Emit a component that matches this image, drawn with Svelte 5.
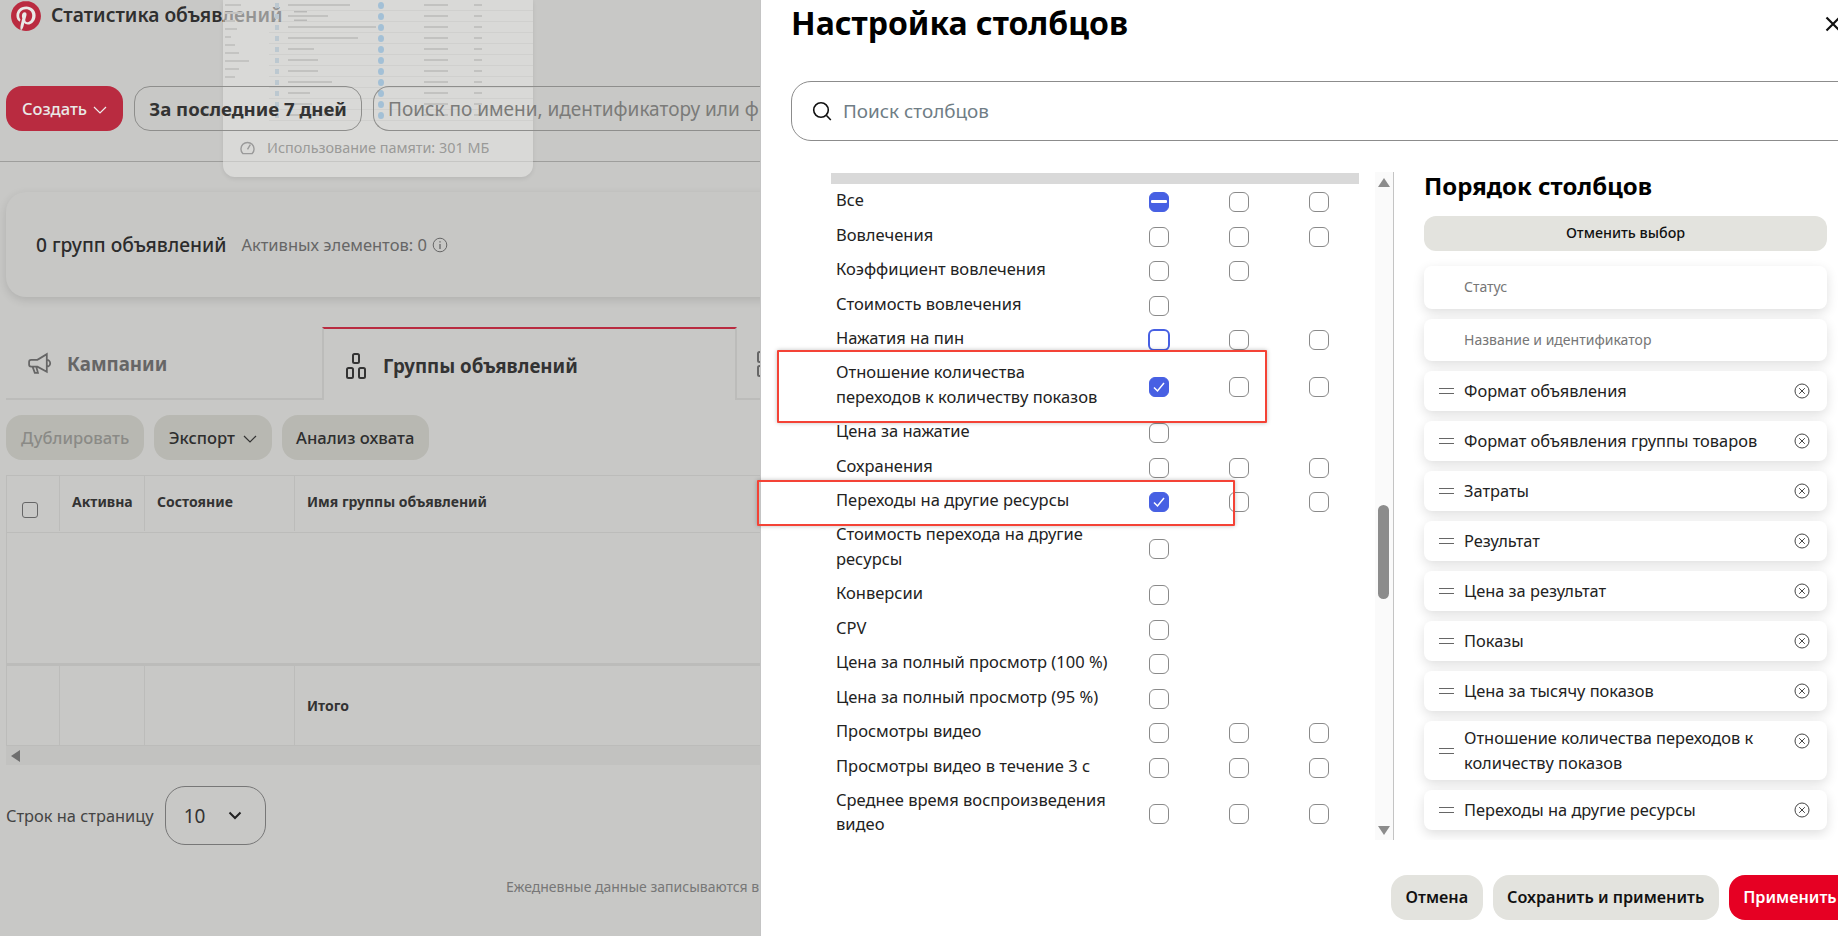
<script>
  const rows = [
    ['Все', ['minus', 'off', 'off']],
    ['Вовлечения', ['off', 'off', 'off']],
    ['Коэффициент вовлечения', ['off', 'off']],
    ['Стоимость вовлечения', ['off']],
    ['Нажатия на пин', ['focus', 'off', 'off']],
    ['Отношение количества переходов к количеству показов', ['on', 'off', 'off']],
    ['Цена за нажатие', ['off']],
    ['Сохранения', ['off', 'off', 'off']],
    ['Переходы на другие ресурсы', ['on', 'off', 'off']],
    ['Стоимость перехода на другие ресурсы', ['off']],
    ['Конверсии', ['off']],
    ['CPV', ['off']],
    ['Цена за полный просмотр (100 %)', ['off']],
    ['Цена за полный просмотр (95 %)', ['off']],
    ['Просмотры видео', ['off', 'off', 'off']],
    ['Просмотры видео в течение 3 с', ['off', 'off', 'off']],
    ['Среднее время воспроизведения видео', ['off', 'off', 'off']]
  ];
  const order = [
    'Формат объявления', 'Формат объявления группы товаров', 'Затраты', 'Результат',
    'Цена за результат', 'Показы', 'Цена за тысячу показов',
    'Отношение количества переходов к количеству показов', 'Переходы на другие ресурсы'
  ];
  const thumbs = [62, 40, 88, 70, 26, 30, 30, 44, 22, 24, 50];
  const side = [16, 18, 10, 12, 6, 10, 14, 24, 14, 10];
</script>

<div class="page">
  <section class="back">
    <header class="brand">
      <svg class="logo" viewBox="0 0 24 24"><circle cx="12" cy="12" r="11" fill="#e9e9e7"/><path fill="#ba2b40" d="M12.017 0C5.396 0 .029 5.367.029 11.987c0 5.079 3.158 9.417 7.618 11.162-.105-.949-.199-2.403.041-3.439.219-.937 1.406-5.957 1.406-5.957s-.359-.72-.359-1.781c0-1.663.967-2.911 2.168-2.911 1.024 0 1.518.769 1.518 1.688 0 1.029-.653 2.567-.992 3.992-.285 1.193.6 2.165 1.775 2.165 2.128 0 3.768-2.245 3.768-5.487 0-2.861-2.063-4.869-5.008-4.869-3.41 0-5.409 2.562-5.409 5.199 0 1.033.394 2.143.889 2.741.099.12.112.225.085.345-.09.375-.293 1.199-.334 1.363-.053.225-.172.271-.401.165-1.495-.69-2.433-2.878-2.433-4.646 0-3.776 2.748-7.252 7.92-7.252 4.158 0 7.392 2.967 7.392 6.923 0 4.135-2.607 7.462-6.233 7.462-1.214 0-2.354-.629-2.758-1.379l-.749 2.848c-.269 1.045-1.004 2.352-1.498 3.146 1.123.345 2.306.535 3.55.535 6.607 0 11.985-5.365 11.985-11.987C23.97 5.39 18.592.026 11.985.026L12.017 0z"/></svg>
      <span class="brand-title">Статистика объявлений</span>
      <svg class="burger" viewBox="0 0 14 10"><path d="M0 .5h14M0 5h14M0 9.500h14" stroke="#555" stroke-width="1"/></svg>
    </header>

    <div class="toolbar">
      <div class="create">Создать <svg class="chev" viewBox="0 0 14 8"><path d="M1 1l6 6 6-6" fill="none" stroke="#eee" stroke-width="1.200"/></svg></div>
      <div class="range">За последние 7 дней</div>
      <div class="find">Поиск по имени, идентификатору или фильтрам</div>
    </div>
    <div class="rule"></div>

    <div class="summary">
      <strong>0 групп объявлений</strong>
      <span class="active">Активных элементов: 0</span>
      <svg class="info" viewBox="0 0 16 16"><circle cx="8" cy="8" r="6.800" fill="none" stroke="#666" stroke-width="1"/><path d="M8 7v5M8 4.200v1.300" stroke="#666" stroke-width="1.300"/></svg>
    </div>

    <nav class="tabs">
      <div class="tab">
        <svg class="tab-ico" viewBox="0 0 24 24"><path d="M4 8.500h6l9-5.500v17l-9-5h-6a2 2 0 0 1-2-2v-2.500a2 2 0 0 1 2-2zM5.500 15.500l2 5.500h3l-1.500-5.500M19 8.500a3.200 3.200 0 0 1 0 6.500" fill="none" stroke="#666" stroke-width="1.700"/></svg>
        Кампании
      </div>
      <div class="tab current">
        <svg class="tab-ico groups" viewBox="0 0 20 26"><g fill="none" stroke="#333" stroke-width="2"><rect x="7" y="1" width="6" height="9" rx="1.500"/><rect x="1" y="15" width="6" height="10" rx="1.500"/><rect x="13" y="15" width="6" height="10" rx="1.500"/></g></svg>
        Группы объявлений
      </div>
      <div class="tab rest">
        <svg class="tab-ico groups" viewBox="0 0 20 26"><g fill="none" stroke="#666" stroke-width="2"><rect x="1" y="1" width="6" height="10" rx="1.500"/><rect x="1" y="15" width="6" height="10" rx="1.500"/></g></svg>
      </div>
    </nav>

    <div class="actions">
      <div class="soft muted">Дублировать</div>
      <div class="soft">Экспорт <svg class="chev" viewBox="0 0 14 8"><path d="M1 1l6 6 6-6" fill="none" stroke="#333" stroke-width="1.200"/></svg></div>
      <div class="soft">Анализ охвата</div>
    </div>

    <div class="table">
      <div class="tr head">
        <div class="td c1"><span class="box"></span></div>
        <div class="td c2">Активна</div>
        <div class="td c3">Состояние</div>
        <div class="td c4">Имя группы объявлений</div>
      </div>
      <div class="empty"></div>
      <div class="tr total">
        <div class="td c1"></div>
        <div class="td c2"></div>
        <div class="td c3"></div>
        <div class="td c4">Итого</div>
      </div>
      <div class="hscroll"><i></i></div>
    </div>

    <div class="pager">
      <span>Строк на страницу</span>
      <div class="select">10 <svg viewBox="0 0 14 9"><path d="M1.500 1.500l5.500 5.500 5.500-5.500" fill="none" stroke="#222" stroke-width="2"/></svg></div>
    </div>
    <p class="note">Ежедневные данные записываются в</p>

    <aside class="popup">
      <div class="side">
        {#each side as w}<i style="width:{w}px"></i>{/each}
      </div>
      <div class="mini">
        {#each thumbs as w}
          <div class="mini-row">
            <i class="sq"></i><span><i class="ln" style="width:{w}px"></i></span><i class="dot"></i><i class="ln short"></i><i class="ln tiny"></i>
          </div>
        {/each}
      </div>
      <div class="mem">
        <svg viewBox="0 0 16 16"><path d="M3 14.500a7 7 0 1 1 10 0zM8 10l3-5" fill="none" stroke="#9a9a9a" stroke-width="1.500"/></svg>
        Использование памяти: 301 МБ
      </div>
    </aside>
  </section>

  <section class="modal">
    <h1>Настройка столбцов</h1>
    <svg class="close" viewBox="0 0 16 16"><path d="M1.500 1.500l13 13M14.500 1.500l-13 13" stroke="#111" stroke-width="2.200"/></svg>
    <div class="search">
      <svg viewBox="0 0 20 20"><circle cx="9" cy="9" r="7.300" fill="none" stroke="#111" stroke-width="1.600"/><path d="M14.500 14.500l4.300 4.500" stroke="#111" stroke-width="1.600"/></svg>
      <span>Поиск столбцов</span>
    </div>

    <div class="body">
      <div class="list">
        <div class="list-top"></div>
        {#each rows as [label, cells]}
          <div class="row">
            <div class="label"><span>{label}</span></div>
            {#each cells as c}
              <div class="cell">
                <span class="check {c}">
                  {#if c === 'on'}
                    <svg viewBox="0 0 20 20"><path d="M5 10.500l3.500 3.500 6.500-8" fill="none" stroke="#fff" stroke-width="1.500"/></svg>
                  {:else if c === 'minus'}
                    <i></i>
                  {/if}
                </span>
              </div>
            {/each}
          </div>
        {/each}
      </div>

      <div class="vscroll">
        <i class="up"></i>
        <b></b>
        <i class="down"></i>
      </div>

      <div class="order">
        <h2>Порядок столбцов</h2>
        <div class="clear">Отменить выбор</div>
        <div class="item fixed first">Статус</div>
        <div class="item fixed second">Название и идентификатор</div>
        {#each order as name}
          <div class="item">
            <svg class="drag" viewBox="0 0 15 6"><path d="M0 .5h15M0 5.500h15" stroke="#666" stroke-width="1"/></svg>
            <span class="name">{name}</span>
            <svg class="rm" viewBox="0 0 16 16"><circle cx="8" cy="8" r="7" fill="none" stroke="#444" stroke-width="1"/><path d="M5.200 5.200l5.600 5.600M10.800 5.200l-5.600 5.600" stroke="#444" stroke-width="1"/></svg>
          </div>
        {/each}
      </div>
    </div>

    <footer>
      <div class="btn">Отмена</div>
      <div class="btn">Сохранить и применить</div>
      <div class="btn red">Применить</div>
    </footer>
  </section>

  <div class="mark one"></div>
  <div class="mark two"></div>
</div>

<style>
  :global(body) { margin: 0; background: #fff; }
  .page {
    position: relative;
    display: grid;
    grid-template-columns: 760px 1078px;
    width: 1838px;
    height: 936px;
    overflow: hidden;
    font-family: "Noto Sans", "Open Sans", sans-serif;
    color: #333;
  }

  /* dimmed page */
  .back {
    position: relative;
    background: #c8c8c6;
    height: 936px;
    overflow: hidden;
    padding-left: 6px;
    box-sizing: border-box;
  }
  .brand { display: flex; align-items: center; height: 31px; padding-left: 5px; }
  .logo { width: 30px; height: 30px; flex: none; }
  .brand-title { margin-left: 10px; font-size: 19.200px; font-weight: 600; color: #2f2f2f; white-space: nowrap; padding-bottom: 2px; }
  .burger { width: 13px; height: 10px; margin-left: 12px; }

  .toolbar { position: relative; z-index: 1; display: flex; gap: 11px; margin-top: 55px; height: 45px; }
  .create {
    flex: none; width: 117px; box-sizing: border-box; background: #b92b40; color: #e9e9e7; border-radius: 16px;
    display: flex; align-items: center; justify-content: center; gap: 6px; font-size: 16.500px; font-weight: 500;
  }
  .chev { width: 14px; height: 8px; margin-top: 2px; flex: none; }
  .range {
    flex: none; width: 228px; box-sizing: border-box; border: 1px solid #8e8e8c; border-radius: 16px;
    display: flex; align-items: center; justify-content: center; font-size: 18.600px; font-weight: 700; color: #333; white-space: nowrap;
  }
  .find {
    width: 700px; flex: none; box-sizing: border-box; border: 1px solid #8e8e8c; border-radius: 16px 0 0 16px; border-right: 0;
    display: flex; align-items: center; padding-left: 14px; font-size: 19px; color: #7b7b79; white-space: nowrap;
  }
  .rule { height: 1px; background: #9e9e9c; margin: 30px 0 0 -6px; }

  .summary {
    margin-top: 30px; margin-right: -10px; height: 105px; border-radius: 20px 0 0 20px;
    background: #c7c7c5; box-shadow: 0 3px 10px rgba(0, 0, 0, .12);
    display: flex; align-items: center; padding-left: 30px;
  }
  .summary strong { font-size: 19.200px; font-weight: 500; color: #2c2c2c; }
  .active { margin-left: 15px; font-size: 16.500px; color: #666; }
  .info { width: 16px; height: 16px; margin-left: 5px; }

  .tabs { display: flex; margin-top: 30px; height: 73px; margin-right: -6px; }
  .tab {
    flex: none; width: 316px; box-sizing: border-box; border-bottom: 2px solid #bcbcba;
    display: flex; align-items: center; gap: 15px; padding-left: 21px; padding-top: 2px;
    font-size: 18.700px; font-weight: 700; color: #666;
  }
  .tab.current {
    width: 415px; border: solid #bcbcba; border-width: 0 2px; border-top: 2px solid #b92b40;
    padding-left: 22px; gap: 17px; color: #333; padding-top: 2px;
  }
  .tab.rest { flex: 1; padding-left: 20px; width: auto; }
  .tab-ico { width: 25px; height: 25px; flex: none; }
  .tab-ico.groups { width: 20px; height: 26px; }

  .actions { display: flex; gap: 10px; margin-top: 15px; height: 45px; }
  .soft {
    box-sizing: border-box; background: #b8b8b2; border-radius: 16px; padding: 0 14.500px;
    display: flex; align-items: center; gap: 8px; font-size: 16.600px; font-weight: 500; color: #2e2e2e;
  }
  .soft.muted { color: #8a8a86; padding: 0 15px; }

  .table { margin-top: 15px; margin-right: -6px; }
  .tr { display: grid; grid-template-columns: 53px 85px 150px 1fr; box-sizing: border-box; border: solid #bcbcba; border-width: 1px 0 1px 1px; }
  .head { height: 58px; }
  .total { height: 83px; border-top: 3px solid #bcbcba; border-bottom: 1px solid #bcbcba; }
  .td { border-right: 1px solid #bcbcba; padding-left: 12px; font-size: 14px; font-weight: 700; color: #333; display: flex; align-items: center; white-space: nowrap; }
  .td.c4 { border-right: 0; }
  .head .td { padding-bottom: 5px; box-sizing: border-box; height: 55px; }
  .head .c1 { padding: 12px 0 0 15px; }
  .box { width: 14px; height: 14px; border: 1px solid #666; border-radius: 3px; display: block; }
  .empty { height: 130px; border-left: 1px solid #bcbcba; box-sizing: border-box; }
  .hscroll { height: 19px; background: #c2c2c0; display: flex; align-items: center; padding-left: 5px; }
  .hscroll i { border: solid transparent; border-width: 6px 9px 6px 0; border-right-color: #6e6e6e; }

  .pager { display: flex; align-items: center; gap: 11px; margin-top: 21px; font-size: 16.400px; color: #444; }
  .select {
    width: 101px; height: 59px; box-sizing: border-box; border: 1px solid #777; border-radius: 20px;
    display: flex; align-items: center; padding-left: 18px; gap: 23px; font-size: 19px; color: #333;
  }
  .select svg { width: 14px; height: 9px; }
  .note { margin: 32px 0 0 500px; font-size: 14px; color: #777; white-space: nowrap; }

  .popup {
    position: absolute; left: 223px; top: 0; width: 310px; height: 177px; box-sizing: border-box;
    background: rgba(232, 232, 230, .55); border-radius: 0 0 12px 12px; box-shadow: 0 2px 4px rgba(0, 0, 0, .08);
    overflow: hidden; display: flex;
  }
  .side { width: 46px; flex: none; display: flex; flex-direction: column; gap: 6px; padding: 4px 0 0 2px; box-sizing: border-box; }
  .side i { display: block; height: 2px; background: #c4c4c2; flex: none; }
  .mini { flex: 1; display: flex; flex-direction: column; height: 125px; }
  .mini-row {
    display: grid; grid-template-columns: 13px 90px 46px 50px 1fr; align-items: center; padding-left: 6px;
    height: 11px; flex: none; border-bottom: 1px solid rgba(0, 0, 0, .04); box-sizing: border-box;
  }
  .mini-row span { display: block; }
  .mini-row i { display: block; }
  .sq { width: 4px; height: 5px; background: #bcc8d0; }
  .ln { height: 2px; background: #c2c2c0; }
  .dot { width: 6px; height: 7px; border-radius: 50%; background: #a3c0d6; }
  .ln.short { width: 24px; }
  .ln.tiny { width: 8px; }
  .mem {
    position: absolute; left: 17px; top: 138px; display: flex; align-items: center; gap: 12px;
    font-size: 14.400px; color: #9a9a98; white-space: nowrap;
  }
  .mem svg { width: 15px; height: 15px; }

  /* modal */
  .modal {
    position: relative; background: #fff; height: 936px; box-sizing: border-box; border-left: 1px solid #c4c4c4; overflow: hidden;
  }
  h1 { margin: 0; padding: 0 0 0 30px; height: 46px; font-size: 32px; line-height: 46px; font-weight: 700; color: #000; white-space: nowrap; }
  .close { position: absolute; left: 1064px; top: 16px; width: 16px; height: 16px; }
  .search {
    margin: 35px -30px 0 30px; height: 60px; box-sizing: border-box; border: 1px solid #8c8c8c; border-radius: 20px;
    display: flex; align-items: center; padding-left: 20px; gap: 11px; font-size: 18.900px; color: #6f7d85;
  }
  .search svg { width: 20px; height: 20px; flex: none; }

  .body {
    display: grid; grid-template-columns: 528px 19px 417px; column-gap: 16px; margin: 21px 0 0 70px; padding-top: 10px;
    height: 678px; box-sizing: border-box; overflow: hidden;
  }
  .list-top { height: 11px; background: #d9d9d9; margin-bottom: 1px; margin-top: 1px; }
  .row { display: grid; grid-template-columns: 313px 80px 80px 20px; align-items: center; padding: 4.750px 0 4.750px 5px; min-height: 25px; }
  .label { font-size: 16.500px; line-height: 24.500px; color: #222; transform: translateY(-2px); }
  .label span { display: block; max-width: 275px; }
  .cell { height: 20px; }
  .check { display: block; width: 20px; height: 20px; box-sizing: border-box; border: 1px solid #8a8a8a; border-radius: 6px; position: relative; background: #fff; }
  .check.on, .check.minus { background: #4760e3; border-color: #4760e3; }
  .check.on svg { position: absolute; inset: -1px; width: 20px; height: 20px; }
  .check.minus i { position: absolute; left: 1px; right: 1px; top: 7px; height: 3px; background: #fff; border-radius: 1px; }
  .check.focus { border: 2px solid #4760e3; width: 22px; height: 22px; margin: -1px; }

  .vscroll { position: relative; background: #fafafa; border-right: 1px solid #c4c4c4; box-sizing: border-box; height: 668px; }
  .vscroll b { position: absolute; left: 3px; top: 333px; width: 11px; height: 94px; border-radius: 6px; background: #8c8c8c; }
  .vscroll i { position: absolute; left: 3px; border: solid transparent; border-width: 0 6px; }
  .vscroll .up { top: 6px; border-bottom: 9px solid #8c8c8c; }
  .vscroll .down { bottom: 5px; border-top: 9px solid #8c8c8c; }

  .order { padding-left: 14px; }
  h2 { margin: 0; height: 44px; font-size: 24px; line-height: 28px; font-weight: 700; color: #000; white-space: nowrap; }
  .clear {
    height: 35px; box-sizing: border-box; padding-bottom: 2px; background: #e3e3de; border-radius: 12px; margin-bottom: 15px;
    display: flex; align-items: center; justify-content: center; font-size: 14.300px; font-weight: 500; color: #111;
  }
  .item {
    position: relative; display: flex; align-items: center; min-height: 40px; margin-bottom: 10px; border-radius: 8px; background: #fff;
    box-shadow: 0 4px 12px rgba(0, 0, 0, .13); font-size: 16.400px; line-height: 25px; color: #222; padding: 3.500px 50px 5.500px 40px; box-sizing: border-box;
  }
  .item .name { display: block; }
  .item.fixed { color: #767676; font-size: 14px; }
  .item.first { height: 43px; }
  .item.second { height: 42px; }
  .drag { position: absolute; left: 15px; top: 50%; width: 15px; height: 6px; margin-top: -3px; }
  .rm { position: absolute; right: 17px; top: 12px; width: 16px; height: 16px; }

  footer { display: flex; gap: 10px; padding-left: 630px; margin-top: 35px; }
  .btn {
    height: 45px; box-sizing: border-box; padding: 0 14.500px 2px; border-radius: 16px; background: #e3e3de; display: flex; align-items: center; flex: none;
    font-size: 16.200px; font-weight: 600; color: #111; white-space: nowrap;
  }
  .btn.red { background: #e60023; color: #fff; width: 130px; }

  /* annotations */
  .mark { position: absolute; border: 2px solid #f44336; box-shadow: 0 0 4px rgba(0, 0, 0, .25); box-sizing: border-box; border-radius: 1px; }
  .mark.one { left: 777px; top: 350px; width: 490px; height: 73px; }
  .mark.two { left: 757px; top: 480px; width: 478px; height: 46px; }
</style>
